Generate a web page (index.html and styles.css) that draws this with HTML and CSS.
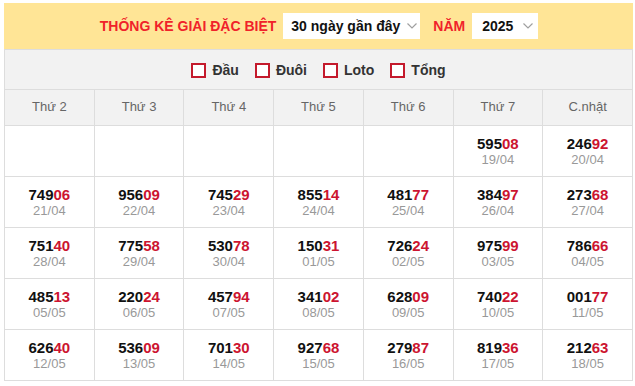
FILE: index.html
```html
<!DOCTYPE html>
<html lang="vi">
<head>
<meta charset="utf-8">
<link rel="stylesheet" href="styles.css">
</head>
<body>
<div class="box">
  <div class="filter">
    <span class="title">THỐNG KÊ GIẢI ĐẶC BIỆT</span>
    <div class="select sel-days"><span>30 ngày gần đây</span><svg class="chev" width="10" height="6" viewBox="0 0 10 6"><path d="M0.5 0.5 L5 5 L9.5 0.5" fill="none" stroke="#a0a0a0" stroke-width="1.2"/></svg></div>
    <span class="title">NĂM</span>
    <div class="select sel-year"><span>2025</span><svg class="chev" width="10" height="6" viewBox="0 0 10 6"><path d="M0.5 0.5 L5 5 L9.5 0.5" fill="none" stroke="#a0a0a0" stroke-width="1.2"/></svg></div>
  </div>
  <div class="opts">
    <label class="opt"><span class="cb"></span>Đầu</label>
    <label class="opt"><span class="cb"></span>Đuôi</label>
    <label class="opt"><span class="cb"></span>Loto</label>
    <label class="opt"><span class="cb"></span>Tổng</label>
  </div>
  <table class="grid">
    <thead>
      <tr><th>Thứ 2</th><th>Thứ 3</th><th>Thứ 4</th><th>Thứ 5</th><th>Thứ 6</th><th>Thứ 7</th><th>C.nhật</th></tr>
    </thead>
    <tbody>
      <tr>
        <td></td><td></td><td></td><td></td><td></td>
        <td><div class="num">595<em>08</em></div><div class="date">19/04</div></td>
        <td><div class="num">246<em>92</em></div><div class="date">20/04</div></td>
      </tr>
      <tr>
        <td><div class="num">749<em>06</em></div><div class="date">21/04</div></td>
        <td><div class="num">956<em>09</em></div><div class="date">22/04</div></td>
        <td><div class="num">745<em>29</em></div><div class="date">23/04</div></td>
        <td><div class="num">855<em>14</em></div><div class="date">24/04</div></td>
        <td><div class="num">481<em>77</em></div><div class="date">25/04</div></td>
        <td><div class="num">384<em>97</em></div><div class="date">26/04</div></td>
        <td><div class="num">273<em>68</em></div><div class="date">27/04</div></td>
      </tr>
      <tr>
        <td><div class="num">751<em>40</em></div><div class="date">28/04</div></td>
        <td><div class="num">775<em>58</em></div><div class="date">29/04</div></td>
        <td><div class="num">530<em>78</em></div><div class="date">30/04</div></td>
        <td><div class="num">150<em>31</em></div><div class="date">01/05</div></td>
        <td><div class="num">726<em>24</em></div><div class="date">02/05</div></td>
        <td><div class="num">975<em>99</em></div><div class="date">03/05</div></td>
        <td><div class="num">786<em>66</em></div><div class="date">04/05</div></td>
      </tr>
      <tr>
        <td><div class="num">485<em>13</em></div><div class="date">05/05</div></td>
        <td><div class="num">220<em>24</em></div><div class="date">06/05</div></td>
        <td><div class="num">457<em>94</em></div><div class="date">07/05</div></td>
        <td><div class="num">341<em>02</em></div><div class="date">08/05</div></td>
        <td><div class="num">628<em>09</em></div><div class="date">09/05</div></td>
        <td><div class="num">740<em>22</em></div><div class="date">10/05</div></td>
        <td><div class="num">001<em>77</em></div><div class="date">11/05</div></td>
      </tr>
      <tr>
        <td><div class="num">626<em>40</em></div><div class="date">12/05</div></td>
        <td><div class="num">536<em>09</em></div><div class="date">13/05</div></td>
        <td><div class="num">701<em>30</em></div><div class="date">14/05</div></td>
        <td><div class="num">927<em>68</em></div><div class="date">15/05</div></td>
        <td><div class="num">279<em>87</em></div><div class="date">16/05</div></td>
        <td><div class="num">819<em>36</em></div><div class="date">17/05</div></td>
        <td><div class="num">212<em>63</em></div><div class="date">18/05</div></td>
      </tr>
    </tbody>
  </table>
</div>
</body>
</html>
```

FILE: styles.css
```css
* { box-sizing: border-box; }
html, body { margin: 0; padding: 0; background: #fff; }
body { font-family: "Liberation Sans", Arial, sans-serif; }

.box {
  width: 629px;
  margin: 3px 0 0 4px;
}

.filter {
  height: 46px;
  background: #ffe596;
  display: flex;
  align-items: center;
  justify-content: center;
  padding-left: 1px;
}
.title {
  color: #f0222a;
  font-weight: bold;
  font-size: 14px;
}
.select {
  height: 26px;
  background: #fff;
  display: flex;
  align-items: center;
  font-weight: bold;
  font-size: 14px;
  color: #111;
  padding-left: 8px;
}
.sel-days { width: 137px; margin: 0 13px 0 7px; }
.sel-year { width: 66px; margin-left: 7px; padding-left: 10px; }
.chev { margin-left: 7px; }
.sel-year .chev { margin-left: 10px; }

.opts {
  height: 40px;
  background: #f2f2f2;
  border: 1px solid #dddddd;
  border-bottom: none;
  display: flex;
  align-items: center;
  justify-content: center;
  padding-top: 1px;
}
.opt {
  display: flex;
  align-items: center;
  font-weight: bold;
  font-size: 14px;
  color: #333;
  margin: 0 8px;
}
.cb {
  width: 15px;
  height: 15px;
  border: 2px solid #c41a2c;
  background: #fff;
  margin-right: 6px;
}

.grid {
  width: 629px;
  border-collapse: collapse;
  table-layout: fixed;
}
.grid th, .grid td {
  border: 1px solid #dddddd;
  text-align: center;
}
.grid th {
  height: 36px;
  background: #f2f2f2;
  font-weight: normal;
  font-size: 13px;
  color: #666;
  padding: 0 0 2px;
}
.grid td {
  height: 51px;
  padding: 0;
}
.num {
  font-size: 15px;
  line-height: 17px;
  font-weight: bold;
  color: #111;
}
.num em {
  font-style: normal;
  color: #cc1430;
}
.date {
  font-size: 13px;
  line-height: 15px;
  color: #999;
}
```
